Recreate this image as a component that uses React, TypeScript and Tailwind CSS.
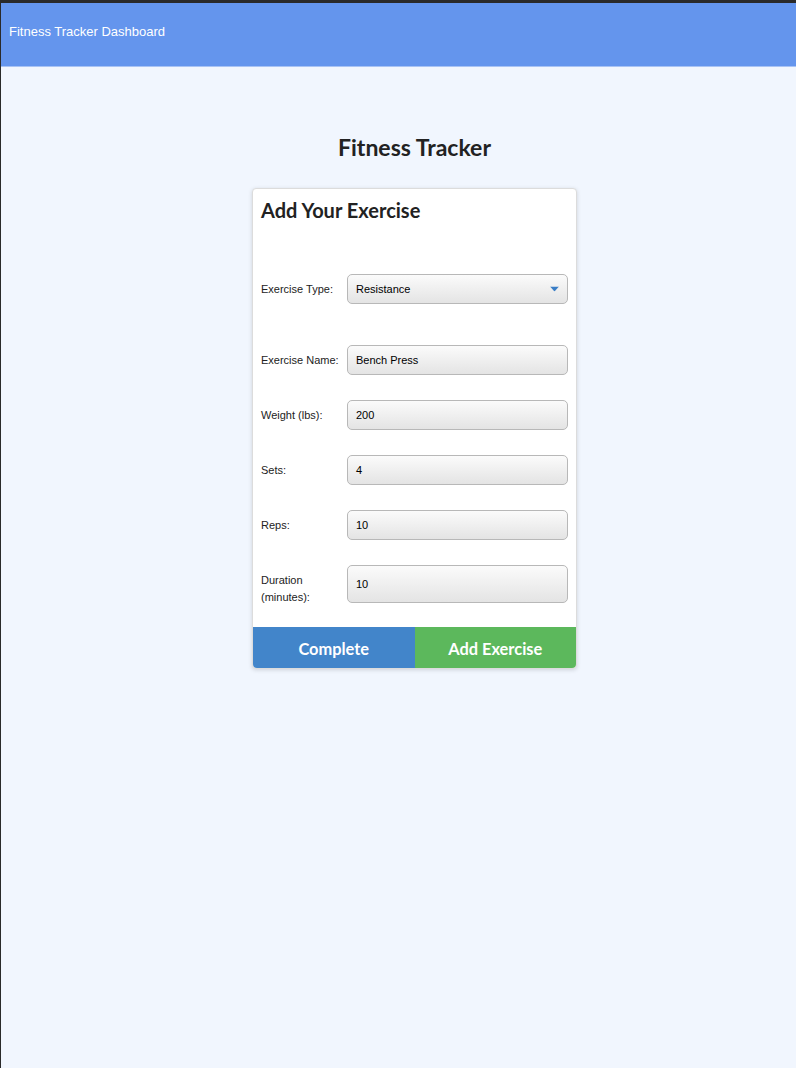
import React from "react";

const sans = { fontFamily: '"Liberation Sans", Arial, sans-serif' };

function Field({ label, value, tall, select }: { label: React.ReactNode; value: string; tall?: boolean; select?: boolean }) {
  return (
    <div className="flex items-center">
      <div className={`w-[86px] shrink-0 text-[11px] leading-[17px] text-[#222] ${tall ? "translate-y-[5px]" : ""}`}>{label}</div>
      <div
        className={`relative flex w-[221px] items-center rounded-[5px] border border-[#b8b8b8] bg-gradient-to-b from-[#fbfbfb] to-[#e4e4e4] pl-[8px] text-[11px] text-black ${tall ? "h-[38px]" : "h-[30px]"}`}
      >
        {value}
        {select && (
          <svg className="absolute right-[8px] top-1/2 -translate-y-1/2" width="9" height="5" viewBox="0 0 9 5">
            <path d="M0 0 H9 L4.5 5 Z" fill="#3a7ec6" />
          </svg>
        )}
      </div>
    </div>
  );
}

export default function App() {
  return (
    <div className="min-h-screen border-l border-t-[3px] border-[#2a2a2a] bg-[#f1f6fe]" style={sans}>
      <header className="flex h-[64px] items-center border-b border-[#a8c3f5] bg-[#6495ed] pb-[6px] pl-[8px] text-[13px] text-white">
        Fitness Tracker Dashboard
      </header>
      <main className="flex flex-col items-center pl-[32px]">
        <h1 className="mt-[67px] text-[23px] font-bold leading-[26px] text-[#222]" style={{ fontFamily: "Lato, sans-serif" }}>
          Fitness Tracker
        </h1>
        <div className="mt-[28px] w-[325px] rounded-[4px] border border-[#dcdcdc] bg-white shadow-[0_1px_4px_rgba(0,0,0,0.15)]">
          <div className="px-[8px] pt-[8px]">
            <h2 className="text-[20px] font-bold leading-[26px] text-[#222]" style={{ fontFamily: "Lato, sans-serif" }}>
              Add Your Exercise
            </h2>
            <div className="mt-[51px]">
              <Field label="Exercise Type:" value="Resistance" select />
            </div>
            <div className="mt-[41px] flex flex-col gap-[25px]">
              <Field label="Exercise Name:" value="Bench Press" />
              <Field label="Weight (lbs):" value="200" />
              <Field label="Sets:" value="4" />
              <Field label="Reps:" value="10" />
              <Field
                label={
                  <>
                    Duration
                    <br />
                    (minutes):
                  </>
                }
                value="10"
                tall
              />
            </div>
          </div>
          <div className="mt-[24px] flex text-[16.4px] font-bold text-white" style={{ fontFamily: "Lato, sans-serif" }}>
            <button className="flex h-[41px] flex-1 items-center justify-center rounded-bl-[4px] bg-[#4285ca] pt-[3px]">Complete</button>
            <button className="flex h-[41px] flex-1 items-center justify-center rounded-br-[4px] bg-[#5cb85c] pt-[3px]">Add Exercise</button>
          </div>
        </div>
      </main>
    </div>
  );
}
